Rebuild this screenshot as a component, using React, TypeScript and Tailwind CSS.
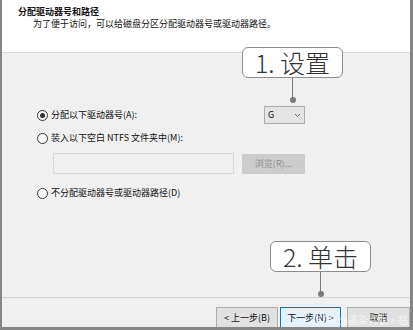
const font = { fontFamily: '"Noto Sans CJK SC", "Noto Sans", sans-serif' };

function Radio({ checked }: { checked?: boolean }) {
  return (
    <span className="flex h-[11px] w-[11px] shrink-0 items-center justify-center rounded-full border border-[#333] bg-white">
      {checked && <span className="h-[5px] w-[5px] rounded-full bg-[#333]" />}
    </span>
  );
}

function Callout({ text, className }: { text: string; className: string }) {
  return (
    <div className={`absolute flex flex-col items-center ${className}`}>
      <div className="flex h-[31px] w-[101px] items-center justify-center rounded-[6px] border border-[#8c8c8c] bg-white text-[25px] font-light leading-none text-[#333]">
        {text}
      </div>
      <div className="h-[22px] w-px bg-[#7a7a7a]" />
      <div className="-mt-[3px] h-[6px] w-[6px] rounded-full bg-[#7a7a7a]" />
    </div>
  );
}

export default function App() {
  return (
    <div
      className="relative h-[330px] w-[413px] overflow-hidden border-b-[3px] border-l-2 border-r-[3px] border-[#858585] bg-[#f0f0f0] text-[9px] text-[#111]"
      style={font}
    >
      <div className="h-[53px] border-b border-[#d9d9d9] bg-white pl-[16px] pt-[6px] leading-[11px]">
        <div className="font-bold">分配驱动器号和路径</div>
        <div className="mt-[1px] pl-[15px]">为了便于访问，可以给磁盘分区分配驱动器号或驱动器路径。</div>
      </div>

      <div className="flex h-[244px] flex-col pl-[35px] pt-[53px]">
        <div className="flex h-[18px] items-center">
          <div className="flex w-[227px] items-center gap-[3px]">
            <Radio checked />
            <span>分配以下驱动器号(A):</span>
          </div>
          <div className="flex h-[18px] w-[41px] items-center justify-between border border-[#adadad] bg-[#e5e5e5] px-[3px] text-[9px]">
            <span>G</span>
            <svg width="7" height="5" viewBox="0 0 7 5">
              <path d="M1 1l2.5 2.5L6 1" fill="none" stroke="#555" strokeWidth="0.9" />
            </svg>
          </div>
        </div>
        <div className="mt-[7px] flex h-[14px] items-center gap-[3px]">
          <Radio />
          <span>装入以下空白 NTFS 文件夹中(M):</span>
        </div>
        <div className="mt-[8px] flex items-start pl-[16px]">
          <div className="h-[21px] w-[181px] border border-[#d9d9d9] bg-[#f0f0f0]" />
          <div className="ml-[8px] mt-[1px] flex h-[20px] w-[63px] items-center justify-center border border-[#cccccc] bg-[#cccccc] text-[#8d8d8d]">
            浏览(R)...
          </div>
        </div>
        <div className="mt-[12px] flex h-[14px] items-center gap-[3px]">
          <Radio />
          <span>不分配驱动器号或驱动器路径(D)</span>
        </div>
      </div>

      <div className="border-t border-[#d2d2d2] pl-[214px] pt-[9px]">
        <div className="flex">
          <div className="flex h-[22px] w-[63px] items-center justify-center border border-[#adadad] bg-[#e1e1e1]">
            &lt; 上一步(B)
          </div>
          <div className="ml-[2px] flex h-[22px] w-[62px] items-center justify-center border border-[#0078d7] bg-[#e5f1fb]">
            下一步(N) &gt;
          </div>
          <div className="ml-[6px] flex h-[22px] w-[64px] items-center justify-center border border-[#adadad] bg-[#e1e1e1]">
            取消
          </div>
        </div>
      </div>

      <div className="pointer-events-none absolute left-[308px] top-[312px] text-[10px] text-white/60">CSDN @墨染青衣·枯树谊</div>

      <Callout text="1. 设置" className="left-[240px] top-[47px]" />
      <Callout text="2. 单击" className="left-[268px] top-[241px]" />
    </div>
  );
}
